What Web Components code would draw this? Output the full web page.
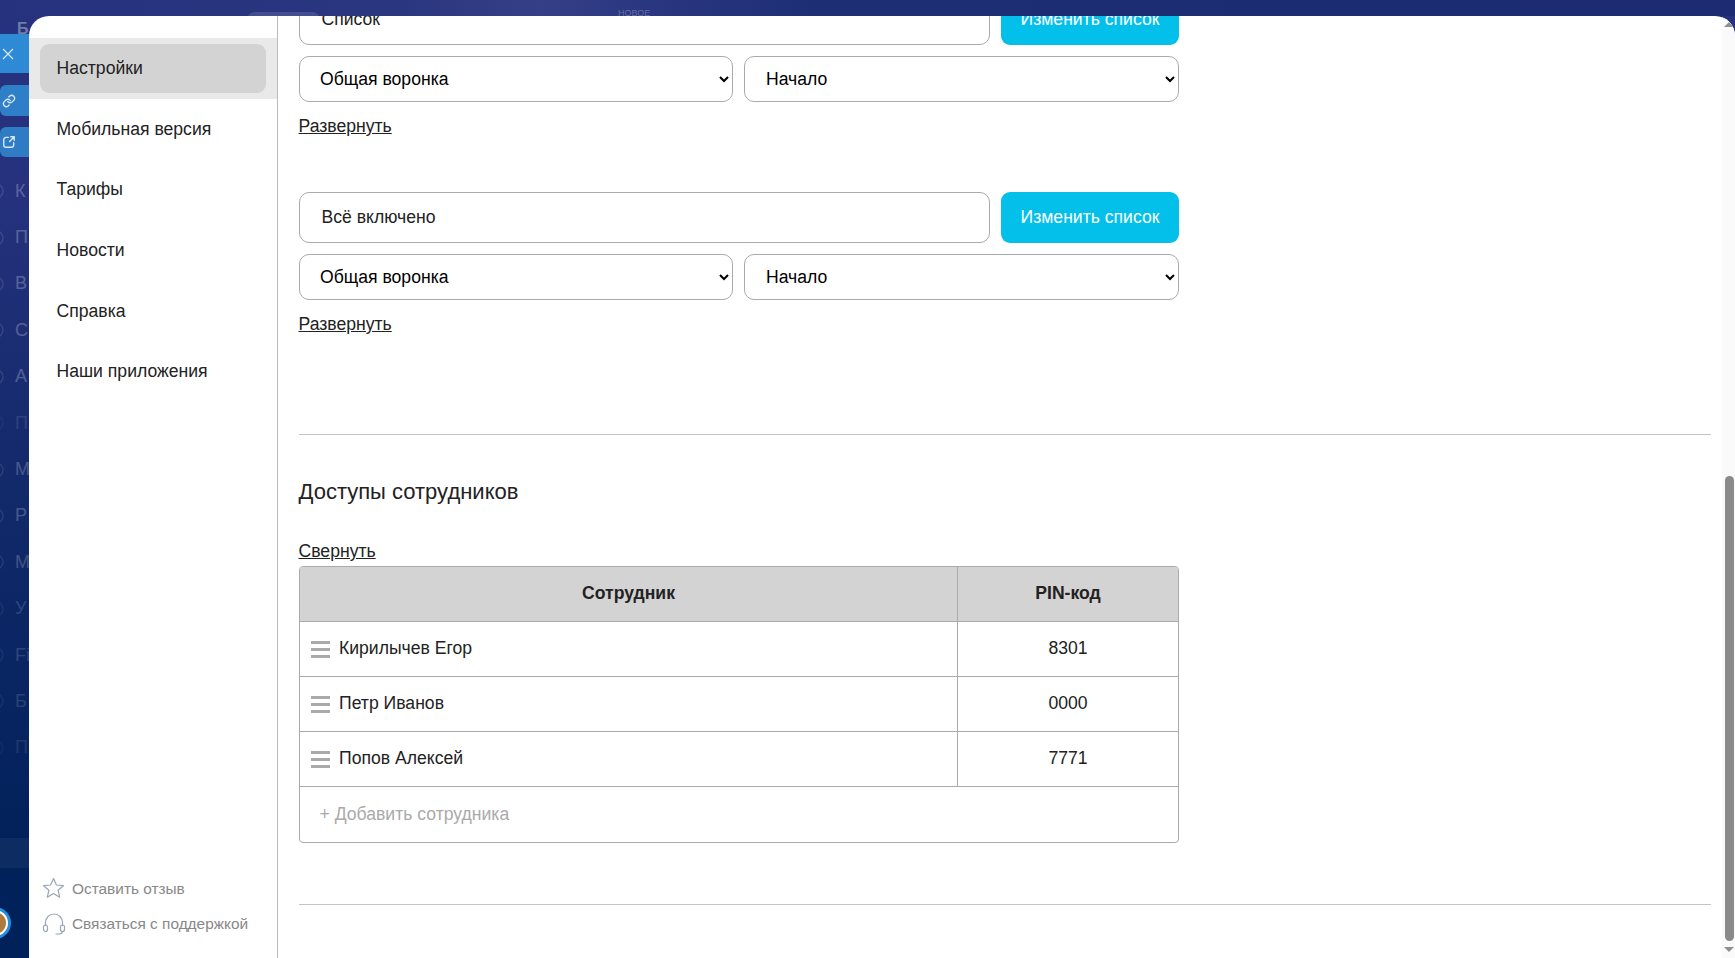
<!DOCTYPE html>
<html lang="ru">
<head>
<meta charset="utf-8">
<title>Настройки</title>
<style>
  html, body { margin: 0; height: 100%; overflow: hidden; font-family: "Liberation Sans", Arial, sans-serif; }
</style>
</head>
<body>
<crm-app>
  <app-backdrop slot="backdrop"></app-backdrop>
  <settings-modal slot="modal">
    <side-nav slot="nav">
      <nav-item active>Настройки</nav-item>
      <nav-item>Мобильная версия</nav-item>
      <nav-item>Тарифы</nav-item>
      <nav-item>Новости</nav-item>
      <nav-item>Справка</nav-item>
      <nav-item>Наши приложения</nav-item>
      <foot-link slot="foot" icon="star">Оставить отзыв</foot-link>
      <foot-link slot="foot" icon="headset">Связаться с поддержкой</foot-link>
    </side-nav>
    <funnel-group name="Список" class="cut"></funnel-group>
    <funnel-group name="Всё включено"></funnel-group>
    <section-rule class="after-groups"></section-rule>
    <staff-table>
      <staff-row pin="8301">Кирилычев Егор</staff-row>
      <staff-row pin="0000">Петр Иванов</staff-row>
      <staff-row pin="7771">Попов Алексей</staff-row>
    </staff-table>
    <section-rule class="after-table"></section-rule>
  </settings-modal>
</crm-app>

<script>
// small helper so every component has the same setup
function shadow(el, html) {
  el.attachShadow({ mode: 'open' });
  el.shadowRoot.innerHTML = html;
}

class CrmApp extends HTMLElement {
  connectedCallback() {
    shadow(this, `
      <style>
        :host { display: block; position: relative; width: 100vw; height: 100vh; overflow: hidden; }
        .over { position: absolute; top: 16px; left: 29px; right: 0; bottom: 0; display: flex; }
        ::slotted([slot="modal"]) { flex: 1; min-width: 0; }
      </style>
      <slot name="backdrop"></slot>
      <div class="over"><slot name="modal"></slot></div>
    `);
  }
}

class AppBackdrop extends HTMLElement {
  connectedCallback() {
    // only the left edge of the page behind the modal is visible
    const letters = [
      ['К', .24], ['П', .24], ['В', .24], ['С', .24], ['А', .24], ['П', .1], ['М', .22],
      ['Р', .22], ['М', .2], ['У', .14], ['Fi', .14], ['Б', .13], ['П', .09]
    ];
    const rail = letters.map(([t, o]) => `
      <div class="item" style="--o:${o}">
        <svg width="16" height="18" viewBox="0 0 16 18" fill="none" stroke="#fff" stroke-width="1.5"><circle cx="8" cy="9" r="7"/></svg>
        <span>${t}</span>
      </div>`).join('');
    shadow(this, `
      <style>
        :host {
          display: block; position: absolute; inset: 0;
          background:
            linear-gradient(90deg, #27327f 0, #2b3680 400px, #343f87 540px, #2a3680 650px, #1d2e75 820px, #1c2b72 100%) 0 0 / 100% 16px no-repeat,
            linear-gradient(180deg, #27327f 0, #27327f 170px, #142a6c 450px, #01215a 860px);
          font-family: "Liberation Sans", Arial, sans-serif;
        }
        .rail { width: 29px; height: 100%; overflow: hidden; padding-top: 22px; box-sizing: border-box; }
        .brand { height: 146px; padding-left: 17px; color: #6f7ca8; font-weight: 700; font-size: 16px; line-height: 14px; }
        .item { height: 46.4px; display: flex; align-items: center; gap: 11px; margin-left: -12px; color: #fff; font-size: 18px; }
        .item span { opacity: var(--o); flex: none; }
        .item svg { opacity: calc(var(--o) * .45); flex: none; }
        .band { position: absolute; left: 0; top: 838px; width: 29px; height: 30px; background: rgba(255,255,255,.05); }
        .avatar {
          position: absolute; left: -21px; top: 907px; width: 26px; height: 26px;
          border: 3px solid #1f8fe6; outline: 2px solid #fff; outline-offset: -5px;
          border-radius: 50%; background: #b07a3f;
        }
        .tab {
          position: absolute; left: 0; width: 29px; display: flex; align-items: center; justify-content: center;
          box-sizing: border-box;
        }
        .close { top: 34px; height: 39px; background: #2f8ad6; }
        .link { top: 85px; height: 31px; background: #2f7fc8; border-radius: 6px 0 0 6px; }
        .out { top: 127px; height: 30px; background: #2f7cc4; border-radius: 6px 0 0 6px; }
        .tab svg { margin-right: 11px; }
        .close svg { margin-right: 13px; }
        .pill { position: absolute; left: 247px; top: 12px; width: 73px; height: 20px; border-radius: 8px; background: rgba(255,255,255,.12); }
        .new { position: absolute; left: 618px; top: 8px; font-size: 9px; line-height: 10px; color: rgba(255,255,255,.28); }
      </style>
      <div class="rail">
        <div class="brand">Б</div>
        ${rail}
      </div>
      <div class="band"></div>
      <div class="avatar"></div>
      <div class="pill"></div>
      <div class="new">НОВОЕ</div>
      <div class="tab close">
        <svg width="12" height="12" viewBox="0 0 12 12" fill="none" stroke="#d8e8f6" stroke-width="1.2"><path d="M1 1l10 10M11 1L1 11"/></svg>
      </div>
      <div class="tab link">
        <svg width="14" height="14" viewBox="0 0 24 24" fill="none" stroke="#d8e8f6" stroke-width="2.4" stroke-linecap="round" stroke-linejoin="round"><path d="M10 13a5 5 0 0 0 7.5.5l3-3a5 5 0 0 0-7-7l-1.7 1.7"/><path d="M14 11a5 5 0 0 0-7.5-.5l-3 3a5 5 0 0 0 7 7l1.7-1.7"/></svg>
      </div>
      <div class="tab out">
        <svg width="14" height="14" viewBox="0 0 24 24" fill="none" stroke="#d8e8f6" stroke-width="2.4" stroke-linecap="round" stroke-linejoin="round"><path d="M11 4H7a4 4 0 0 0-4 4v9a4 4 0 0 0 4 4h9a4 4 0 0 0 4-4v-4"/><path d="M13 11l8-8M15 3h6v6"/></svg>
      </div>
    `);
  }
}

class SettingsModal extends HTMLElement {
  connectedCallback() {
    shadow(this, `
      <style>
        :host { display: block; }
        .box { height: 100%; display: flex; background: #fff; border-radius: 20px 20px 0 0; overflow: hidden; }
        .content { flex: 1; min-width: 0; overflow: hidden; padding: 0 11px 0 21px; }
        .bar { flex: none; width: 13px; background: #fafafa; display: flex; flex-direction: column; align-items: center; }
        .up { margin-top: 6px; border: 5px solid transparent; border-top: 0; border-bottom: 5px solid #8f8f8f; }
        .thumb { margin: 449px 0 0 1px; width: 9px; height: 465px; border-radius: 5px; background: #8a8a8a; }
        .down { margin-top: 6px; border: 5px solid transparent; border-bottom: 0; border-top: 5px solid #8f8f8f; }
      </style>
      <div class="box">
        <slot name="nav"></slot>
        <div class="content"><slot></slot></div>
        <div class="bar"><div class="up"></div><div class="thumb"></div><div class="down"></div></div>
      </div>
    `);
  }
}

class SideNav extends HTMLElement {
  connectedCallback() {
    shadow(this, `
      <style>
        :host {
          flex: none; width: 249px; box-sizing: border-box; border-right: 1px solid #bbb;
          display: flex; flex-direction: column; justify-content: space-between;
          padding: 22px 0 23px;
        }
        .foot { display: flex; flex-direction: column; gap: 13px; padding-left: 13px; }
      </style>
      <div><slot></slot></div>
      <div class="foot"><slot name="foot"></slot></div>
    `);
  }
}

class NavItem extends HTMLElement {
  connectedCallback() {
    shadow(this, `
      <style>
        :host { display: block; height: 60.6px; padding: 6px 11px; box-sizing: border-box; font-size: 17.6px; color: #222; cursor: pointer; }
        :host([active]) { height: 61px; background: #e9e9e9; }
        .in { height: 100%; display: flex; align-items: center; padding-left: 16.5px; border-radius: 9px; }
        :host([active]) .in { background: #d3d3d3; }
      </style>
      <div class="in"><slot></slot></div>
    `);
  }
}

class FootLink extends HTMLElement {
  connectedCallback() {
    const icons = {
      star: '<path d="M11.5 1.5l2.9 6.5 7 .7-5.3 4.6 1.6 6.9-6.2-3.6-6.2 3.6 1.6-6.9L1.6 8.7l7-.7z"/>',
      headset: '<path d="M3.5 14V10.5a8.5 8.5 0 0 1 17 0V14"/><rect x="1.5" y="13" width="4" height="6.5" rx="2"/><rect x="18.5" y="13" width="4" height="6.5" rx="2"/><path d="M20.5 19.5c0 1.7-2 2.5-4 2.5h-3"/>'
    };
    shadow(this, `
      <style>
        :host { display: flex; align-items: center; gap: 6px; height: 22px; font-size: 15.4px; color: #888; cursor: pointer; }
        svg { flex: none; }
      </style>
      <svg width="24" height="24" viewBox="0 0 24 24" fill="none" stroke="#9aa5b8" stroke-width="1.2" stroke-linejoin="round">${icons[this.getAttribute('icon')]}</svg>
      <slot></slot>
    `);
  }
}

class FunnelGroup extends HTMLElement {
  connectedCallback() {
    shadow(this, `
      <style>
        :host { display: block; width: 880px; margin-bottom: 56px; font-size: 17.6px; color: #222; }
        :host(.cut) { margin-top: -22px; }
        .top { display: flex; gap: 11px; height: 51px; }
        .name {
          flex: 1; box-sizing: border-box; border: 1px solid #aaa; border-radius: 10px;
          display: flex; align-items: center; padding-left: 21.5px; outline: none;
        }
        button {
          flex: none; width: 178px; border: 0; border-radius: 9px; background: #02c0ea; color: #fff;
          font: inherit; cursor: pointer; padding: 0;
        }
        .selects { display: grid; grid-template-columns: 434px 1fr; gap: 11px; margin-top: 11px; }
        select {
          height: 46px; box-sizing: border-box; width: 100%; border: 1px solid #aaa; border-radius: 10px;
          background: #fff; color: #000; font: inherit; padding: 0 5px 0 16px;
        }
        select + select { padding-left: 17px; }
        a { display: block; width: max-content; margin: 14px 0 0 -.5px; height: 20px; line-height: 20px; color: #222; text-decoration: underline; cursor: pointer; }
      </style>
      <div class="top">
        <div class="name" contenteditable="true">${this.getAttribute('name')}</div>
        <button type="button">Изменить список</button>
      </div>
      <div class="selects">
        <select><option>Общая воронка</option></select>
        <select><option>Начало</option></select>
      </div>
      <a>Развернуть</a>
    `);
  }
}

class SectionRule extends HTMLElement {
  connectedCallback() {
    shadow(this, `
      <style>
        :host { display: block; height: 1px; background: #c4c4c4; }
        :host(.after-groups) { margin-top: 100px; }
        :host(.after-table) { margin-top: 61px; }
      </style>
    `);
  }
}

class StaffTable extends HTMLElement {
  connectedCallback() {
    shadow(this, `
      <style>
        :host { display: block; width: 880px; font-size: 17.6px; color: #222; }
        h2 { margin: 44px 0 36px -.5px; font-size: 22px; line-height: 26px; font-weight: 400; }
        a { display: block; width: max-content; margin-left: -.5px; height: 20px; line-height: 20px; color: #222; text-decoration: underline; cursor: pointer; }
        .table { margin-top: 5px; border: 1px solid #aaa; border-radius: 4px; overflow: hidden; }
        .head { display: grid; grid-template-columns: 1fr 221px; height: 54px; background: #d3d3d3; font-weight: 700; }
        .head div { display: flex; align-items: center; justify-content: center; padding-bottom: 1px; }
        .head div + div { border-left: 1px solid #aaa; }
        .add { height: 55px; border-top: 1px solid #aaa; display: flex; align-items: center; padding-left: 19.5px; color: #aaa; cursor: pointer; }
      </style>
      <h2>Доступы сотрудников</h2>
      <a>Свернуть</a>
      <div class="table">
        <div class="head"><div>Сотрудник</div><div>PIN-код</div></div>
        <slot></slot>
        <div class="add">+ Добавить сотрудника</div>
      </div>
    `);
  }
}

class StaffRow extends HTMLElement {
  connectedCallback() {
    shadow(this, `
      <style>
        :host { display: grid; grid-template-columns: 1fr 221px; height: 55px; box-sizing: border-box; border-top: 1px solid #aaa; }
        .who { display: flex; align-items: center; gap: 9px; padding: 0 0 1px 11px; }
        .grip { flex: none; width: 19px; height: 17px; margin-top: 2px; background: repeating-linear-gradient(180deg, #aaa 0 3px, transparent 3px 7px); }
        .pin { border-left: 1px solid #aaa; display: flex; align-items: center; justify-content: center; padding-bottom: 1px; }
      </style>
      <div class="who"><span class="grip"></span><slot></slot></div>
      <div class="pin">${this.getAttribute('pin')}</div>
    `);
  }
}

customElements.define('crm-app', CrmApp);
customElements.define('app-backdrop', AppBackdrop);
customElements.define('settings-modal', SettingsModal);
customElements.define('side-nav', SideNav);
customElements.define('nav-item', NavItem);
customElements.define('foot-link', FootLink);
customElements.define('funnel-group', FunnelGroup);
customElements.define('section-rule', SectionRule);
customElements.define('staff-table', StaffTable);
customElements.define('staff-row', StaffRow);
</script>
</body>
</html>
